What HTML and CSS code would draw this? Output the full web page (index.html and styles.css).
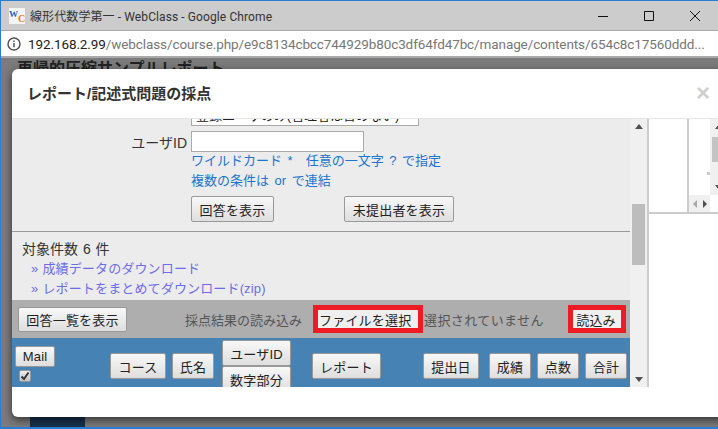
FILE: index.html
```html
<!DOCTYPE html>
<html lang="ja">
<head>
  <meta charset="UTF-8" />
  <title>線形代数学第一 - WebClass - Google Chrome</title>
  <link rel="stylesheet" href="styles.css">
</head>
<body>
  <div class="window">
    <div class="titlebar">
      <div class="favicon"><span class="fav-w">W</span><span class="fav-c">C</span></div>
      <div class="title">線形代数学第一 - WebClass - Google Chrome</div>
      <div class="win-buttons">
        <svg width="12" height="12" viewBox="0 0 12 12"><path d="M1 6.5h10" stroke="#111" fill="none"/></svg>
        <svg width="12" height="12" viewBox="0 0 12 12"><path d="M1.5 1.5h9v9h-9z" stroke="#111" fill="none"/></svg>
        <svg width="12" height="12" viewBox="0 0 12 12"><path d="M1 1l10 10M11 1L1 11" stroke="#111" fill="none"/></svg>
      </div>
    </div>
    <div class="addressbar">
      <svg class="info" width="14" height="14" viewBox="0 0 14 14">
        <circle cx="7" cy="7" r="6" stroke="#555" stroke-width="1.5" fill="none"/>
        <path d="M7 6v4.2M7 3.6v1.4" stroke="#555" stroke-width="1.5" fill="none"/>
      </svg>
      <div class="url"><span class="host">192.168.2.99</span>/webclass/course.php/e9c8134cbcc744929b80c3df64fd47bc/manage/contents/654c8c17560ddd...</div>
    </div>
    <div class="page">
      <h1 class="page-heading">再帰的圧縮サンプルレポート</h1>
      <div class="page-block"></div>

      <div class="modal">
        <div class="modal-header">
          <h2>レポート/記述式問題の採点</h2>
          <span class="close">×</span>
        </div>
        <div class="modal-body">
          <div class="pane">
            <div class="scroll-area">
              <div class="select-row"><div class="select">登録ユーザのみ(管理者は含めない)</div></div>
              <div class="form-row">
                <label>ユーザID</label>
                <input type="text" class="user-input" />
              </div>
              <div class="help">
                <div>ワイルドカード *　任意の一文字 ? で指定</div>
                <div>複数の条件は or で連結</div>
              </div>
              <div class="actions">
                <button class="btn">回答を表示</button>
                <button class="btn btn-missing">未提出者を表示</button>
              </div>
              <hr class="rule" />
              <div class="summary">
                <div class="count">対象件数 6 件</div>
                <a class="dl-link" href="#">成績データのダウンロード</a>
                <a class="dl-link" href="#">レポートをまとめてダウンロード(zip)</a>
              </div>
            </div>
            <div class="toolbar">
              <button class="btn btn-list">回答一覧を表示</button>
              <span class="import-label">採点結果の読み込み</span>
              <button class="btn btn-file mark">ファイルを選択</button>
              <span class="file-status">選択されていません</span>
              <button class="btn btn-read mark">読込み</button>
            </div>
            <div class="sort-row">
              <div class="mail-col">
                <button class="btn btn-mail">Mail</button>
                <span class="check">
                  <svg width="10" height="10" viewBox="0 0 10 10"><path d="M1.5 5.5l2.5 2.5 4.5-6.5" stroke="#333" stroke-width="2" fill="none"/></svg>
                </span>
              </div>
              <button class="btn w56 course">コース</button>
              <button class="btn w42 name">氏名</button>
              <div class="id-col">
                <button class="btn">ユーザID</button>
                <button class="btn">数字部分</button>
              </div>
              <button class="btn w69 report">レポート</button>
              <button class="btn w56 date">提出日</button>
              <button class="btn w42 grade">成績</button>
              <button class="btn w42 points">点数</button>
              <button class="btn w42 total">合計</button>
            </div>
          </div>
          <div class="scrollbar">
            <span class="arrow-up"></span>
            <span class="thumb"></span>
            <span class="arrow-down"></span>
          </div>
          <div class="side">
            <div class="side-top">
              <div class="side-cell"></div>
              <div class="side-inner">
                <div class="side-view">
                  <div class="side-hbar"><span class="arrow-left"></span><span class="arrow-right"></span></div>
                </div>
                <div class="side-vbar">
                  <span class="arrow-up"></span>
                  <span class="side-thumb"></span>
                  <span class="arrow-down"></span>
                </div>
              </div>
            </div>
          </div>
        </div>
        <div class="modal-footer"></div>
      </div>
    </div>
  </div>
</body>
</html>
```
FILE: styles.css
```css
* {
  box-sizing: border-box;
}
html, body {
  margin: 0;
  height: 100%;
  overflow: hidden;
}
body {
  font-family: "Liberation Sans", "Noto Sans CJK JP", sans-serif;
  font-size: 14px;
  color: #333;
}
.window {
  height: 429px;
  display: flex;
  flex-direction: column;
  border: solid #2b7cd3;
  border-width: 1px 0 2px 1px;
}

/* chrome */
.titlebar {
  height: 29px;
  flex: none;
  background: #cccccc;
  display: flex;
  align-items: center;
  padding-left: 8px;
}
.favicon {
  width: 16px;
  height: 16px;
  flex: none;
  background: #f4f4f4;
  font: bold 9px "Liberation Serif", serif;
  display: flex;
  justify-content: center;
}
.fav-w { color: #2a5fc4; line-height: 12px; }
.fav-c { color: #e8791c; line-height: 21px; font-size: 10px; }
.title {
  margin-left: 5px;
  font: 12px "Roboto", "Noto Sans CJK JP", sans-serif;
  letter-spacing: 0.1px;
  color: #333;
  white-space: nowrap;
}
.win-buttons {
  margin-left: auto;
  display: flex;
  gap: 34px;
  padding-right: 17px;
}
.addressbar {
  height: 28px;
  flex: none;
  background: #fff;
  border-top: 1px solid #aaa;
  border-bottom: 2px solid #aaa;
  display: flex;
  align-items: center;
  padding-left: 6px;
  overflow: hidden;
}
.info {
  flex: none;
}
.url {
  margin-left: 7px;
  font: 13.5px "Roboto", sans-serif;
  letter-spacing: -0.1px;
  color: #777;
  white-space: nowrap;
}
.host {
  color: #222;
}

/* page behind the dialog */
.page {
  flex: 1;
  position: relative;
  background: #7b7b7b;
  overflow: hidden;
}
.page-heading {
  margin: 0 0 0 16px;
  font-size: 16px;
  line-height: 22px;
  color: #222;
}
.page-block {
  position: absolute;
  left: 29px;
  bottom: 0;
  width: 55px;
  height: 12px;
  background: #16324d;
}
.modal {
  position: absolute;
  left: 11px;
  right: -10px;
  top: 11px;
  height: 348px;
  background: #fff;
  border-radius: 6px;
  box-shadow: 0 3px 9px rgba(0, 0, 0, 0.6);
  display: flex;
  flex-direction: column;
}
.modal-header {
  height: 50px;
  flex: none;
  display: flex;
  align-items: center;
  justify-content: space-between;
  padding: 0 18px 3px 15px;
  border-bottom: 1px solid #e5e5e5;
}
.modal-header h2 {
  margin: 0;
  font-size: 15px;
  font-weight: bold;
  color: #333;
}
.close {
  font: bold 24px "Liberation Sans", sans-serif;
  color: #cfcfcf;
  margin-top: 2px;
}
.modal-body {
  height: 268px;
  flex: none;
  display: flex;
  background: #eee;
}
.modal-footer {
  flex: 1;
}

/* left pane */
.pane {
  width: 618px;
  flex: none;
  display: flex;
  flex-direction: column;
  background: #ececec;
}
.scroll-area {
  height: 181px;
  flex: none;
  overflow: hidden;
}
.select-row {
  height: 12px;
  padding-left: 179px;
  overflow: hidden;
}
.select {
  width: 228px;
  height: 21px;
  margin-top: -14px;
  background: #fff;
  border: 1px solid #aaa;
  font-size: 13px;
  line-height: 19px;
  padding-left: 4px;
  color: #222;
  white-space: nowrap;
}
.form-row {
  display: flex;
  align-items: center;
  height: 21px;
}
.form-row label {
  width: 179px;
  text-align: right;
  padding-right: 4px;
}
.user-input {
  width: 173px;
  height: 21px;
  border: 1px solid #aaa;
  background: #fff;
  padding: 0;
}
.help {
  padding-left: 179px;
  color: #1a74d0;
  font-size: 13px;
  line-height: 20px;
  word-spacing: 2px;
  margin-top: -1px;
}
.actions {
  display: flex;
  padding: 5px 0 0 179px;
}
.btn {
  height: 26px;
  padding: 0;
  font-family: inherit;
  font-size: 13px;
  letter-spacing: 0.2px;
  color: #222;
  background: linear-gradient(#f8f8f8, #dedede);
  border: 1px solid #999;
  border-radius: 2px;
  white-space: nowrap;
}
.actions .btn {
  width: 83px;
}
.actions .btn-missing {
  width: 110px;
  margin-left: 70px;
}
.rule {
  margin: 9px 0 0;
  border: 0;
  border-top: 1px solid #999;
}
.summary {
  padding: 7px 0 0 10px;
  line-height: 20px;
}
.count {
  word-spacing: 1px;
}
.dl-link {
  display: block;
  padding-left: 9px;
  font-size: 13px;
  letter-spacing: 0.15px;
  color: #6c6ce8;
  text-decoration: none;
}
.dl-link::before {
  content: "»";
  margin-right: 4px;
}

/* tool bar */
.toolbar {
  height: 38px;
  flex: none;
  background: #aeaeae;
  display: flex;
  align-items: center;
  padding: 0 4px 0 6px;
  font-size: 13px;
  color: #555;
}
.btn-list {
  width: 109px;
  height: 25px;
}
.import-label {
  margin-left: 58px;
}
.mark {
  height: 28px;
  border: 5px solid #ed1c24;
  border-radius: 0;
  background: #efefef;
}
.btn-file {
  width: 110px;
  margin-left: 11px;
  text-align: left;
  padding-left: 1px;
}
.file-status {
  margin-left: 1px;
  letter-spacing: 0.4px;
}
.btn-read {
  width: 58px;
  margin-left: auto;
  padding-right: 2px;
}

/* sort buttons */
.sort-row {
  height: 49px;
  flex: 1;
  background: #4682b4;
  display: flex;
  overflow: hidden;
  padding-top: 15px;
}
.sort-row .btn {
  flex: none;
}
.mail-col {
  display: flex;
  flex-direction: column;
  width: 40px;
  margin: -7px 0 0 3px;
}
.btn-mail {
  height: 21px !important;
}
.check {
  width: 12px;
  height: 12px;
  margin: 3px 0 0 4px;
  background: linear-gradient(#eee, #c4c4c4);
  border: 1px solid #999;
  border-radius: 2px;
  display: flex;
  align-items: center;
  justify-content: center;
}
.id-col {
  display: flex;
  flex-direction: column;
  width: 69px;
  margin: -13px 0 0 8px;
}
.id-col .btn {
  flex: none;
}
.w42 { width: 42px; }
.w56 { width: 56px; }
.w69 { width: 69px; }
.course { margin-left: 55px; }
.name { margin-left: 6px; }
.report { margin-left: 21px; }
.date { margin-left: 42px; }
.grade { margin-left: 10px; }
.points { margin-left: 6px; }
.total { margin-left: 6px; }

/* main scroll bar */
.scrollbar {
  position: relative;
  width: 17px;
  flex: none;
  background: #f0f0f0;
}
.thumb {
  position: absolute;
  left: 2px;
  top: 85px;
  width: 13px;
  height: 61px;
  background: #bdbdbd;
}
.arrow-up, .arrow-down {
  position: absolute;
  left: 5px;
  width: 0;
  height: 0;
  border: 4px solid transparent;
}
.arrow-up {
  top: 5px;
  border-top: 0;
  border-bottom: 5px solid #505050;
}
.arrow-down {
  bottom: 5px;
  border-bottom: 0;
  border-top: 5px solid #505050;
}

/* right pane */
.side {
  flex: 1;
  background: #fff;
  border-left: 2px solid #ccc;
}
.side-top {
  height: 95px;
  display: flex;
  border-bottom: 2px solid #ccc;
}
.side-cell {
  width: 40px;
  flex: none;
  border-right: 2px solid #ccc;
}
.side-inner {
  flex: 1;
  display: flex;
}
.side-view {
  position: relative;
  width: 21px;
  flex: none;
  display: flex;
  align-items: flex-end;
}
/* scroll corner dot */
.side-view::after {
  content: "";
  position: absolute;
  right: 0;
  top: 53px;
  width: 3px;
  height: 3px;
  background: #ccc;
}
.side-hbar {
  width: 21px;
  height: 17px;
  background: #f0f0f0;
  display: flex;
  align-items: center;
  justify-content: center;
  gap: 6px;
}
.arrow-left, .arrow-right {
  width: 0;
  height: 0;
  border: 4px solid transparent;
}
.arrow-left {
  border-left: 0;
  border-right: 4px solid #aaa;
}
.arrow-right {
  border-right: 0;
  border-left: 4px solid #505050;
}
.side-vbar {
  position: relative;
  flex: 1;
  height: 76px;
  background: #f0f0f0;
  padding: 18px 0 0 2px;
}
.side-thumb {
  display: block;
  height: 25px;
  background: #c4c4c4;
}
```
